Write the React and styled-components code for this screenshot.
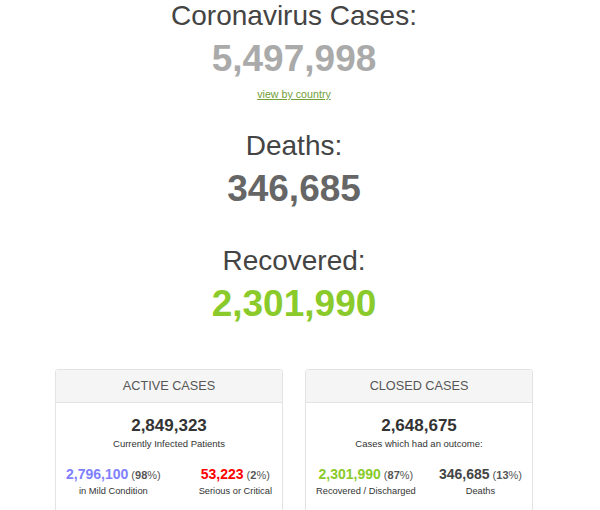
import React from "react";
import styled, { createGlobalStyle } from "styled-components";

const GlobalStyle = createGlobalStyle`
  body {
    margin: 0;
    background: #fff;
    font-family: "Liberation Sans", Arial, sans-serif;
  }
`;

const counters = [
  { title: "Coronavirus Cases:", value: "5,497,998", color: "#aaa", gap: 0, link: true },
  { title: "Deaths:", value: "346,685", color: "#666", gap: 29 },
  { title: "Recovered:", value: "2,301,990", color: "#8aca2b", gap: 35 },
];

const panels = [
  {
    title: "Active Cases",
    total: "2,849,323",
    caption: "Currently Infected Patients",
    parts: [
      { value: "2,796,100", color: "#8080ff", pct: "98", label: "in Mild Condition" },
      { value: "53,223", color: "#ff0000", pct: "2", label: "Serious or Critical" },
    ],
  },
  {
    title: "Closed Cases",
    total: "2,648,675",
    caption: "Cases which had an outcome:",
    parts: [
      { value: "2,301,990", color: "#8aca2b", pct: "87", label: "Recovered / Discharged" },
      { value: "346,685", color: "#444", pct: "13", label: "Deaths" },
    ],
  },
];

const Page = styled.div`
  width: 588px;
  text-align: center;
`;

const CounterWrap = styled.div`
  margin-top: ${(p) => p.$gap}px;
`;

const Title = styled.h1`
  margin: 0;
  font-size: 28px;
  line-height: 32px;
  font-weight: normal;
  color: #444;
`;

const Number = styled.div`
  margin-top: 6px;
  font-size: 37px;
  line-height: 42px;
  font-weight: bold;
  color: ${(p) => p.$color};
`;

const CountryLink = styled.a`
  display: block;
  margin-top: 8px;
  font-size: 10.7px;
  line-height: 13px;
  color: #72a037;
  text-decoration: underline;
`;

const PanelRow = styled.div`
  display: flex;
  justify-content: center;
  gap: 22px;
  margin-top: 44px;
`;

const Panel = styled.div`
  width: 228px;
  border: 1px solid #e3e3e3;
  border-radius: 3px;
  box-shadow: 0 1px 1px rgba(0, 0, 0, 0.04);
  background: #fff;
  box-sizing: border-box;
`;

const PanelHead = styled.div`
  height: 32px;
  line-height: 32px;
  background: #f5f5f5;
  border-bottom: 1px solid #e3e3e3;
  font-size: 12.7px;
  text-transform: uppercase;
  color: #555;
`;

const PanelBody = styled.div`
  padding: 13px 10px 14px;
  color: #333;
`;

const Total = styled.div`
  font-size: 17px;
  line-height: 20px;
  font-weight: bold;
  color: #333;
`;

const Caption = styled.div`
  margin-top: 1px;
  font-size: 9.5px;
  line-height: 13px;
  color: #333;
`;

const Split = styled.div`
  display: flex;
  justify-content: space-between;
  margin-top: 16px;
`;

const Part = styled.div`
  text-align: center;
`;

const PartLine = styled.div`
  font-size: 11px;
  line-height: 17px;
  color: #555;
  white-space: nowrap;
`;

const PartValue = styled.span`
  font-size: 14px;
  font-weight: bold;
  color: ${(p) => p.$color};
`;

const PartLabel = styled.div`
  margin-top: 1px;
  font-size: 9.3px;
  line-height: 13px;
  color: #333;
`;

export default function App() {
  return (
    <>
      <GlobalStyle />
      <Page>
        {counters.map((c) => (
          <CounterWrap key={c.title} $gap={c.gap}>
            <Title>{c.title}</Title>
            <Number $color={c.color}>{c.value}</Number>
            {c.link && <CountryLink href="#countries">view by country</CountryLink>}
          </CounterWrap>
        ))}

        <PanelRow>
          {panels.map((p) => (
            <Panel key={p.title}>
              <PanelHead>{p.title}</PanelHead>
              <PanelBody>
                <Total>{p.total}</Total>
                <Caption>{p.caption}</Caption>
                <Split>
                  {p.parts.map((part) => (
                    <Part key={part.label}>
                      <PartLine>
                        <PartValue $color={part.color}>{part.value}</PartValue> (
                        <strong>{part.pct}</strong>%)
                      </PartLine>
                      <PartLabel>{part.label}</PartLabel>
                    </Part>
                  ))}
                </Split>
              </PanelBody>
            </Panel>
          ))}
        </PanelRow>
      </Page>
    </>
  );
}
